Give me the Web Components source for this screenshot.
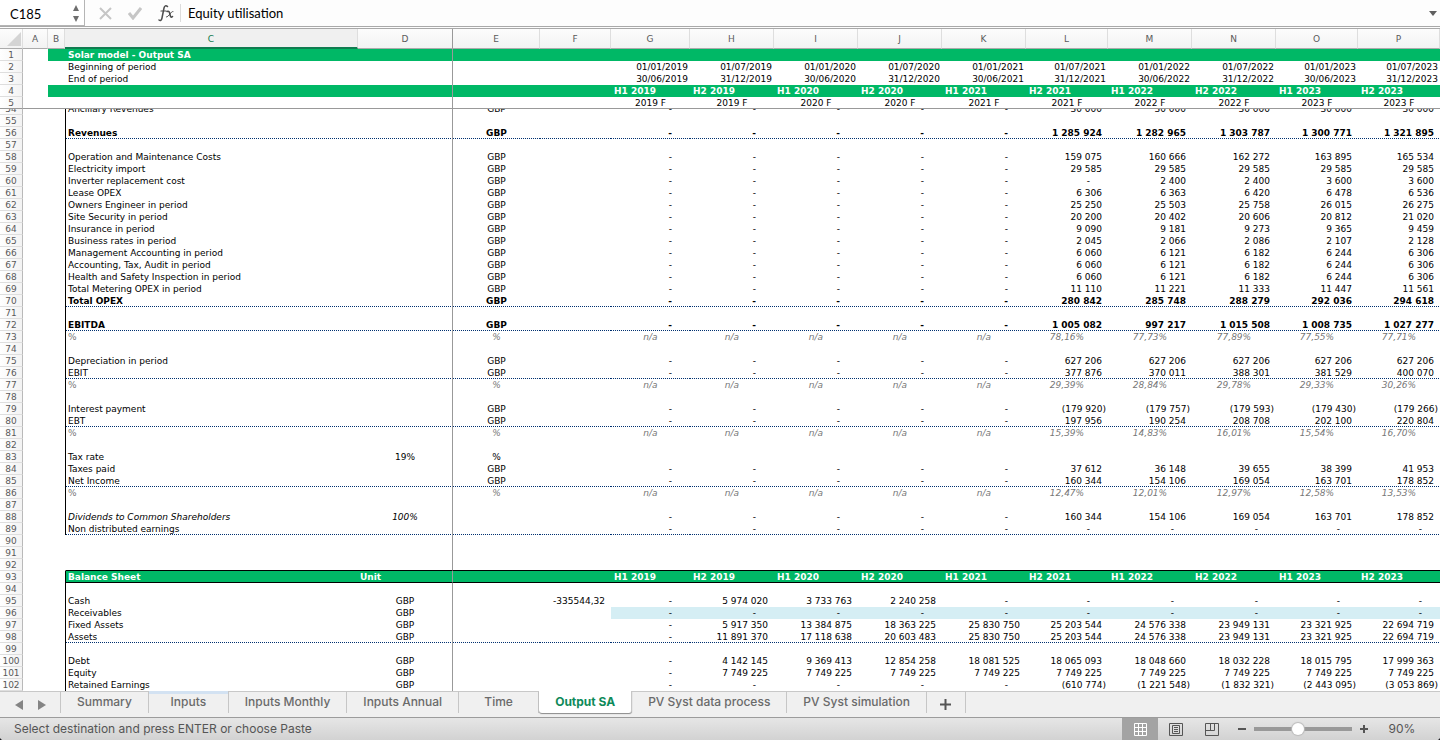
<!DOCTYPE html>
<html lang="en">
<head>
<meta charset="utf-8">
<title>Solar model - Output SA</title>
<style>
  html {
    height: 100%;
    background: #1d1d22;
  }
  body {
    margin: 0;
    height: 100%;
  }
</style>
</head>
<body>
<workbook-window>
  <formula-bar slot="top" cell="C185" value="Equity utilisation"></formula-bar>
  <sheet-grid></sheet-grid>
  <sheet-tabs slot="bottom">
    <sheet-tab>Summary</sheet-tab>
    <sheet-tab marked>Inputs</sheet-tab>
    <sheet-tab>Inputs Monthly</sheet-tab>
    <sheet-tab>Inputs Annual</sheet-tab>
    <sheet-tab>Time</sheet-tab>
    <sheet-tab active>Output SA</sheet-tab>
    <sheet-tab>PV Syst data process</sheet-tab>
    <sheet-tab>PV Syst simulation</sheet-tab>
  </sheet-tabs>
  <status-bar slot="bottom" zoom="90">Select destination and press ENTER or choose Paste</status-bar>
</workbook-window>

<script>
class WorkbookWindow extends HTMLElement {
  constructor() {
    super();
    this.attachShadow({ mode: "open" }).innerHTML = `
      <style>
        :host {
          display: flex;
          flex-direction: column;
          height: 100vh;
          overflow: hidden;
          background: #fff;
          border-radius: 0 0 4px 4px;
        }
        main {
          flex: 1;
          min-height: 0;
          display: flex;
          flex-direction: column;
        }
      </style>
      <slot name="top"></slot>
      <main><slot></slot></main>
      <slot name="bottom"></slot>
    `;
  }
}

class FormulaBar extends HTMLElement {
  constructor() {
    super();
    this.attachShadow({ mode: "open" });
  }

  connectedCallback() {
    this.shadowRoot.innerHTML = `
      <style>
        :host {
          display: flex;
          align-items: center;
          height: 26px;
          flex: none;
          border-bottom: 3px double #a9a9a9;
          background: #fdfdfd;
        }
        input, button {
          border: 0;
          padding: 0;
          margin: 0;
          background: none;
          outline: 0;
          color: #000;
        }
        input {
          font: 13px/18px Lato, "Open Sans", sans-serif;
          min-width: 0;
        }
        button, svg {
          display: block;
        }
        .name {
          box-sizing: border-box;
          width: 85px;
          height: 26px;
          display: flex;
          align-items: center;
          gap: 4px;
          padding: 2px 4px 0 10px;
          background: #fff;
          border-right: 1px solid #b5b5b5;
          border-bottom: 1px solid #b5b5b5;
        }
        .name input {
          flex: 1;
        }
        .tools {
          display: flex;
          align-items: center;
          gap: 16px;
          padding: 0 6px 0 14px;
        }
        .value {
          flex: 1;
          border-left: 1px solid #dcdcdc;
          padding-left: 7px;
        }
        .more {
          padding-right: 3px;
        }
      </style>
      <div class="name">
        <input aria-label="Name box" value="${this.getAttribute("cell")}">
        <button aria-label="Step">
          <svg width="8" height="20"><path d="M1 7 4 1l3 6zM1 12l3 6 3-6z" fill="#6e6e6e"/></svg>
        </button>
      </div>
      <div class="tools">
        <button aria-label="Cancel"><svg width="13" height="14"><path d="M1 2 12 13M12 2 1 13" stroke="#c6c6c6" stroke-width="2"/></svg></button>
        <button aria-label="Enter"><svg width="14" height="14"><path d="M1 7 5 12 13 2" fill="none" stroke="#c6c6c6" stroke-width="3"/></svg></button>
        <button aria-label="Insert function">
          <svg width="16" height="18" fill="none" stroke="#4d4d4d" stroke-linecap="round">
            <path d="M9.5 2.5C8 1 6.500 1.700 6 4L4 14C3.500 16.500 2.300 17 1 16" stroke-width="1.500"/>
            <path d="M3 7h5" stroke-width="1.200"/>
            <path d="M9 7.500c2-1 2.500.5 3 3s1 3.500 2.500 2" stroke-width="1.600"/>
            <path d="M15 7.500c-2-.8-4 5.500-6.500 5.500" stroke-width="1"/>
          </svg>
        </button>
      </div>
      <input class="value" aria-label="Formula" value="${this.getAttribute("value")}">
      <button class="more" aria-label="Expand"><svg width="8" height="8"><path d="M0 2h8L4 7z" fill="#5f5f5f"/></svg></button>
    `;
  }
}

const COLUMNS = [
  ["A", 25], ["B", 17], ["C", 293], ["D", 95], ["E", 87], ["F", 71], ["G", 79], ["H", 84],
  ["I", 84], ["J", 84], ["K", 84], ["L", 82], ["M", 84], ["N", 84], ["O", 82], ["P", 0]
];

const HALVES = "H1 2019|H2 2019|H1 2020|H2 2020|H1 2021|H2 2021|H1 2022|H2 2022|H1 2023|H2 2023";
const NONE = "-|-|-|-|-|";
const NA = "n/a|n/a|n/a|n/a|n/a|";

// n: row number, c/d/e/f: text of these columns, v: G to P, k: classes of the row
const FROZEN = [
  { n: 1, c: "Solar model - Output SA", k: "band" },
  { n: 2, c: "Beginning of period", v: "01/01/2019|01/07/2019|01/01/2020|01/07/2020|01/01/2021|01/07/2021|01/01/2022|01/07/2022|01/01/2023|01/07/2023", k: "dates" },
  { n: 3, c: "End of period", v: "30/06/2019|31/12/2019|30/06/2020|31/12/2020|30/06/2021|31/12/2021|30/06/2022|31/12/2022|30/06/2023|31/12/2023", k: "dates" },
  { n: 4, v: HALVES, k: "band" },
  { n: 5, v: "2019 F|2019 F|2020 F|2020 F|2021 F|2021 F|2022 F|2022 F|2023 F|2023 F", k: "mid last" }
];

const ROWS = [
  { n: 54, c: "Ancillary Revenues", e: "GBP", v: NONE + "30 000|30 000|30 000|30 000|30 000" },
  { n: 55 },
  { n: 56, c: "Revenues", e: "GBP", v: NONE + "1 285 924|1 282 965|1 303 787|1 300 771|1 321 895", k: "bold dots" },
  { n: 57 },
  { n: 58, c: "Operation and Maintenance Costs", e: "GBP", v: NONE + "159 075|160 666|162 272|163 895|165 534" },
  { n: 59, c: "Electricity import", e: "GBP", v: NONE + "29 585|29 585|29 585|29 585|29 585" },
  { n: 60, c: "Inverter replacement cost", e: "GBP", v: NONE + "-|2 400|2 400|3 600|3 600" },
  { n: 61, c: "Lease OPEX", e: "GBP", v: NONE + "6 306|6 363|6 420|6 478|6 536" },
  { n: 62, c: "Owners Engineer in period", e: "GBP", v: NONE + "25 250|25 503|25 758|26 015|26 275" },
  { n: 63, c: "Site Security in period", e: "GBP", v: NONE + "20 200|20 402|20 606|20 812|21 020" },
  { n: 64, c: "Insurance in period", e: "GBP", v: NONE + "9 090|9 181|9 273|9 365|9 459" },
  { n: 65, c: "Business rates in period", e: "GBP", v: NONE + "2 045|2 066|2 086|2 107|2 128" },
  { n: 66, c: "Management Accounting in period", e: "GBP", v: NONE + "6 060|6 121|6 182|6 244|6 306" },
  { n: 67, c: "Accounting, Tax, Audit in period", e: "GBP", v: NONE + "6 060|6 121|6 182|6 244|6 306" },
  { n: 68, c: "Health and Safety Inspection in period", e: "GBP", v: NONE + "6 060|6 121|6 182|6 244|6 306" },
  { n: 69, c: "Total Metering OPEX in period", e: "GBP", v: NONE + "11 110|11 221|11 333|11 447|11 561" },
  { n: 70, c: "Total OPEX", e: "GBP", v: NONE + "280 842|285 748|288 279|292 036|294 618", k: "bold dots" },
  { n: 71 },
  { n: 72, c: "EBITDA", e: "GBP", v: NONE + "1 005 082|997 217|1 015 508|1 008 735|1 027 277", k: "bold dots" },
  { n: 73, c: "%", e: "%", v: NA + "78,16%|77,73%|77,89%|77,55%|77,71%", k: "mid ratio" },
  { n: 74 },
  { n: 75, c: "Depreciation in period", e: "GBP", v: NONE + "627 206|627 206|627 206|627 206|627 206" },
  { n: 76, c: "EBIT", e: "GBP", v: NONE + "377 876|370 011|388 301|381 529|400 070", k: "dots" },
  { n: 77, c: "%", e: "%", v: NA + "29,39%|28,84%|29,78%|29,33%|30,26%", k: "mid ratio" },
  { n: 78 },
  { n: 79, c: "Interest payment", e: "GBP", v: NONE + "(179 920)|(179 757)|(179 593)|(179 430)|(179 266)" },
  { n: 80, c: "EBT", e: "GBP", v: NONE + "197 956|190 254|208 708|202 100|220 804", k: "dots" },
  { n: 81, c: "%", e: "%", v: NA + "15,39%|14,83%|16,01%|15,54%|16,70%", k: "mid ratio" },
  { n: 82 },
  { n: 83, c: "Tax rate", d: "19%", e: "%" },
  { n: 84, c: "Taxes paid", e: "GBP", v: NONE + "37 612|36 148|39 655|38 399|41 953" },
  { n: 85, c: "Net Income", e: "GBP", v: NONE + "160 344|154 106|169 054|163 701|178 852", k: "dots" },
  { n: 86, c: "%", e: "%", v: NA + "12,47%|12,01%|12,97%|12,58%|13,53%", k: "mid ratio" },
  { n: 87 },
  { n: 88, c: "Dividends to Common Shareholders", d: "100%", v: NONE + "160 344|154 106|169 054|163 701|178 852", k: "slanted" },
  { n: 89, c: "Non distributed earnings", v: NONE + "-|-|-|-|-", k: "dots" },
  { n: 90, k: "outside" },
  { n: 91, k: "outside" },
  { n: 92, k: "outside ruled" },
  { n: 93, c: "Balance Sheet", d: "Unit", v: HALVES, k: "band inner ruled" },
  { n: 94 },
  { n: 95, c: "Cash", d: "GBP", f: "-335544,32", v: "-|5 974 020|3 733 763|2 240 258|-|-|-|-|-|-" },
  { n: 96, c: "Receivables", d: "GBP", v: NONE + "-|-|-|-|-", k: "tint" },
  { n: 97, c: "Fixed Assets", d: "GBP", v: "-|5 917 350|13 384 875|18 363 225|25 830 750|25 203 544|24 576 338|23 949 131|23 321 925|22 694 719" },
  { n: 98, c: "Assets", d: "GBP", v: "-|11 891 370|17 118 638|20 603 483|25 830 750|25 203 544|24 576 338|23 949 131|23 321 925|22 694 719", k: "dots" },
  { n: 99 },
  { n: 100, c: "Debt", d: "GBP", v: "-|4 142 145|9 369 413|12 854 258|18 081 525|18 065 093|18 048 660|18 032 228|18 015 795|17 999 363" },
  { n: 101, c: "Equity", d: "GBP", v: "-|7 749 225|7 749 225|7 749 225|7 749 225|7 749 225|7 749 225|7 749 225|7 749 225|7 749 225" },
  { n: 102, c: "Retained Earnings", d: "GBP", v: NONE + "(610 774)|(1 221 548)|(1 832 321)|(2 443 095)|(3 053 869)" }
];

function valueClass(text) {
  if (text === "-") return "v dash";
  if (text.startsWith("(")) return "v neg";
  return "v";
}

function rowMarkup(row) {
  const values = row.v ? row.v.split("|") : Array(10).fill("");
  const cells = values.map((text) => `<td class="${valueClass(text)}">${text}</td>`).join("");
  return `
    <tr class="${row.k || ""}">
      <th scope="row">${row.n}</th><td></td><td class="b"></td>
      <td class="c">${row.c || ""}</td><td class="d">${row.d || ""}</td>
      <td class="e">${row.e || ""}</td><td class="v f">${row.f || ""}</td>${cells}
    </tr>`;
}

class SheetGrid extends HTMLElement {
  constructor() {
    super();
    this.attachShadow({ mode: "open" });
  }

  connectedCallback() {
    const cols = `<colgroup><col style="width:23px">${COLUMNS
      .map(([, width]) => (width ? `<col style="width:${width}px">` : "<col>"))
      .join("")}</colgroup>`;
    const heads = COLUMNS.map(([name]) => `<th scope="col" class="h${name}">${name}</th>`).join("");

    this.shadowRoot.innerHTML = `
      <style>
        :host {
          flex: 1;
          min-height: 0;
          display: flex;
          flex-direction: column;
          font: 9px/10px Verdana, "DejaVu Sans", sans-serif;
          color: #000;
        }
        .pane {
          flex: 1;
          min-height: 0;
          overflow: hidden;
        }
        table {
          width: 100%;
          table-layout: fixed;
          border-collapse: separate;
          border-spacing: 0;
        }
        th, td {
          box-sizing: border-box;
          height: 12px;
          padding: 1px 0 0;
          vertical-align: top;
          white-space: nowrap;
          font-weight: inherit;
        }
        thead th {
          height: 20px;
          vertical-align: middle;
          color: #5a5a5a;
          background: linear-gradient(#fcfcfc, #f3f3f3);
          border-bottom: 1px solid #ababab;
          border-right: 1px solid #dedede;
        }
        thead .hC {
          color: #107c50;
          background: #f0f0f0;
          border-bottom: 2px solid #107c50;
        }
        thead .hD {
          border-right-color: #999;
        }
        thead svg {
          display: block;
          margin-left: 7px;
        }
        tbody th {
          color: #5a5a5a;
          font-weight: normal;
          background: linear-gradient(90deg, #fff, #f3f3f3);
          border-right: 1px solid #b9b9b9;
          border-bottom: 1px solid #dedede;
        }
        .c {
          padding-left: 3px;
        }
        .d, .e {
          text-align: center;
        }
        .d {
          border-right: 1px solid #999;
        }
        .v {
          text-align: right;
          padding-right: 6px;
        }
        .dash {
          padding-right: 18px;
        }
        .neg, .dates .v {
          padding-right: 2px;
        }
        .mid .v {
          text-align: center;
          padding-right: 0;
        }
        .last td, .last th {
          border-bottom: 1px solid #999;
        }
        .band td:not(:nth-child(2)) {
          background: #00b866;
          color: #fff;
          font-weight: bold;
        }
        .band.inner .b {
          background: none !important;
        }
        .band .d {
          text-align: left;
          padding-left: 2px;
        }
        .band .v {
          text-align: left;
          padding-left: 3px;
          padding-right: 0;
        }
        .body .c {
          border-left: 1px solid #000;
          padding-left: 2px;
        }
        .body .outside .c {
          border-left-color: transparent;
        }
        .dots .b ~ td {
          background: repeating-linear-gradient(90deg, #003070 0 1px, #fff 1px 2px) bottom / 100% 1px no-repeat;
        }
        .ruled .b ~ td {
          border-bottom: 1px solid #000;
        }
        .bold td {
          font-weight: bold;
        }
        .ratio td {
          color: #777;
        }
        .ratio .v, .ratio .e, .slanted .c, .slanted .d {
          font-style: italic;
        }
        .tint .f ~ .v {
          background: #d5eef4;
        }
      </style>
      <table>
        ${cols}
        <thead><tr><th><svg width="14" height="14"><path d="M14 0v14H0z" fill="#d4d4d4"/></svg></th>${heads}</tr></thead>
        <tbody>${FROZEN.map(rowMarkup).join("")}</tbody>
      </table>
      <div class="pane">
        <table class="body">
          ${cols}
          <tbody>${ROWS.map(rowMarkup).join("")}</tbody>
        </table>
      </div>
    `;

    // the lower pane is scrolled to its last row
    const pane = this.shadowRoot.querySelector(".pane");
    pane.scrollTop = pane.scrollHeight;
  }
}

class SheetTab extends HTMLElement {
  constructor() {
    super();
    this.attachShadow({ mode: "open" }).innerHTML = `
      <style>
        :host {
          display: block;
          height: 22px;
        }
        button {
          box-sizing: border-box;
          min-width: 80px;
          height: 22px;
          border: 0;
          border-right: 1px solid #c6c6c6;
          padding: 0 16px;
          background: none;
          font: 500 12px/18px Inter, "Liberation Sans", sans-serif;
          color: #6a6a6a;
          white-space: nowrap;
        }
        :host([marked]) button {
          box-shadow: inset 0 3px #d3e2f2;
        }
        :host([active]) button {
          background: #fff;
          color: #0f8a5a;
          font-weight: 700;
          border-radius: 0 0 3px 3px;
          box-shadow: 0 1px 1px #8a8a8a;
        }
      </style>
      <button><slot></slot></button>
    `;
  }
}

class SheetTabs extends HTMLElement {
  constructor() {
    super();
    this.attachShadow({ mode: "open" }).innerHTML = `
      <style>
        :host {
          display: flex;
          flex: none;
          height: 26px;
          background: #f0f0f0;
          box-shadow: inset 0 1px #c8c8c8;
          border-bottom: 1px solid #9c9c9c;
        }
        button {
          border: 0;
          padding: 0;
          background: none;
        }
        svg {
          display: block;
        }
        nav {
          box-sizing: border-box;
          width: 61px;
          height: 22px;
          display: flex;
          align-items: flex-end;
          gap: 15px;
          padding: 0 15px 2px;
          border-right: 1px solid #c6c6c6;
        }
        .add {
          width: 39px;
          height: 22px;
          display: grid;
          place-items: end center;
          padding-bottom: 3px;
          border-right: 1px solid #c6c6c6;
        }
      </style>
      <nav>
        <button aria-label="Previous sheets"><svg width="8" height="12"><path d="M8 1v10L0 6z" fill="#848484"/></svg></button>
        <button aria-label="Next sheets"><svg width="8" height="12"><path d="M0 1v10l8-5z" fill="#848484"/></svg></button>
      </nav>
      <slot></slot>
      <button class="add" aria-label="New sheet"><svg width="11" height="11"><path d="M5.500 0v11M0 5.500h11" stroke="#555" stroke-width="2"/></svg></button>
    `;
  }
}

class StatusBar extends HTMLElement {
  constructor() {
    super();
    this.attachShadow({ mode: "open" });
  }

  connectedCallback() {
    const zoom = this.getAttribute("zoom");
    this.shadowRoot.innerHTML = `
      <style>
        :host {
          display: flex;
          flex: none;
          align-items: center;
          height: 22px;
          background: linear-gradient(#e6e6e6, #d2d2d2);
          font: 12px/16px Inter, Roboto, sans-serif;
          color: #555;
        }
        p {
          flex: 1;
          margin: 0;
          padding-left: 14px;
        }
        button {
          border: 0;
          padding: 0;
          background: none;
          height: 22px;
          display: grid;
          place-items: center;
        }
        svg {
          display: block;
        }
        .view {
          width: 36px;
        }
        .on {
          background: #a3a3a3;
        }
        .scale {
          display: flex;
          align-items: center;
          gap: 8px;
          padding: 0 12px 0 8px;
        }
        input {
          appearance: none;
          width: 98px;
          height: 12px;
          margin: 0;
          background: linear-gradient(#999, #999) center / 100% 4px no-repeat;
        }
        input::-webkit-slider-thumb {
          appearance: none;
          width: 12px;
          height: 12px;
          border-radius: 50%;
          background: #fff;
          box-shadow: 0 0 1px 1px #bbb;
        }
        output {
          width: 52px;
          text-align: center;
        }
      </style>
      <p><slot></slot></p>
      <button class="view on" aria-label="Normal view">
        <svg width="13" height="13" fill="none" stroke="#fff"><path d="M.5.5h12v12H.5zM4.500 0v13M8.500 0v13M0 4.500h13M0 8.500h13"/></svg>
      </button>
      <button class="view" aria-label="Page layout">
        <svg width="14" height="13" fill="none" stroke="#555"><path d="M.5.5h13v12H.5zM3.500 2.500h7v8h-7zM5 4.500h4M5 6.500h4M5 8.500h4"/></svg>
      </button>
      <button class="view" aria-label="Page breaks">
        <svg width="14" height="13" fill="none" stroke="#555"><path d="M.5.5h13v12H.5zM.5 7.500h9V0M5.500 0v7.500"/></svg>
      </button>
      <div class="scale">
        <button aria-label="Zoom out"><svg width="8" height="8"><path d="M0 4h8" stroke="#555" stroke-width="2"/></svg></button>
        <input type="range" aria-label="Zoom" min="10" max="190" value="${zoom}">
        <button aria-label="Zoom in"><svg width="8" height="8"><path d="M0 4h8M4 0v8" stroke="#555" stroke-width="2"/></svg></button>
        <output>${zoom}%</output>
      </div>
    `;
  }
}

customElements.define("workbook-window", WorkbookWindow);
customElements.define("formula-bar", FormulaBar);
customElements.define("sheet-tab", SheetTab);
customElements.define("sheet-tabs", SheetTabs);
customElements.define("status-bar", StatusBar);
// last, as its scroll position depends on the height the bars leave
customElements.define("sheet-grid", SheetGrid);
</script>
</body>
</html>
